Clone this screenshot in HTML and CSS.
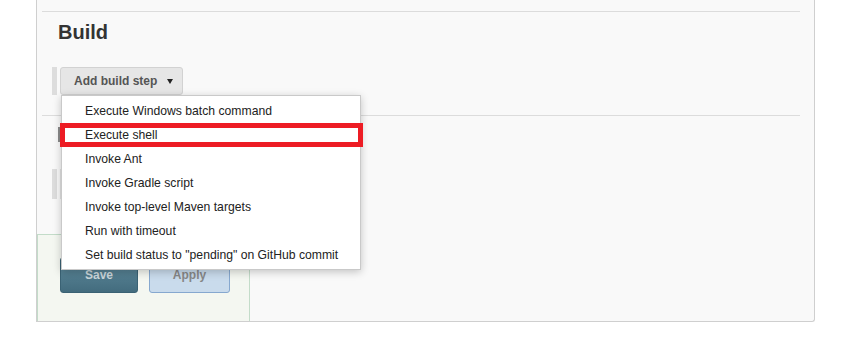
FILE: index.html
```html
<!DOCTYPE html>
<html>
<head>
<meta charset="utf-8">
<link rel="stylesheet" href="styles.css">
</head>
<body>
<div class="page">
  <div class="panel">
    <div class="section">
      <div class="rule"></div>
      <h2 class="title">Build</h2>
      <div class="step-row">
        <span class="handle"></span>
        <button class="step-btn"><span>Add build step</span><span class="caret"></span></button>
      </div>
      <div class="rule rule-2"></div>
      <div class="hidden-bit"></div>
      <div class="step-row step-row-2">
        <span class="handle tall"></span>
        <span class="edge"></span>
      </div>
    </div>
    <div class="bottom-bar">
      <button class="btn save">Save</button>
      <button class="btn apply">Apply</button>
    </div>
  </div>

  <ul class="menu">
    <li class="item">Execute Windows batch command</li>
    <li class="item focus">Execute shell</li>
    <li class="item">Invoke Ant</li>
    <li class="item">Invoke Gradle script</li>
    <li class="item">Invoke top-level Maven targets</li>
    <li class="item">Run with timeout</li>
    <li class="item">Set build status to "pending" on GitHub commit</li>
  </ul>
  <div class="highlight"></div>
</div>
</body>
</html>
```

FILE: styles.css
```css
html, body {
  margin: 0;
  padding: 0;
  background: #ffffff;
  font-family: "Liberation Sans", Arial, sans-serif;
}

.page {
  position: relative;
  width: 843px;
  height: 341px;
  overflow: hidden;
}

.panel {
  margin-left: 36px;
  width: 779px;
  height: 322px;
  box-sizing: border-box;
  background: #f9f9f9;
  border: 1px solid #cfcfcf;
  border-top: none;
  border-bottom-right-radius: 3px;
  display: flex;
  flex-direction: column;
}

.section {
  margin: 0 14px 0 5px;
  padding-top: 11px;
}

.rule {
  height: 0;
  border-top: 1px solid #dcdcdc;
}

.title {
  margin: 8px 0 0 16px;
  font-size: 20px;
  line-height: 24px;
  font-weight: bold;
  color: #333333;
}

.step-row {
  display: flex;
  align-items: stretch;
  margin: 23px 0 0 10px;
  gap: 3px;
}

.handle {
  display: block;
  width: 5px;
  background: #dddddd;
}

.step-btn {
  width: 123px;
  height: 28px;
  box-sizing: border-box;
  margin: 0;
  padding: 0 9px 0 13px;
  display: flex;
  align-items: center;
  justify-content: space-between;
  background: #e6e6e6;
  border: 1px solid #d2d2d2;
  border-radius: 3px;
  font-family: "Liberation Sans", Arial, sans-serif;
  font-size: 12px;
  font-weight: bold;
  color: #555555;
}

.caret {
  width: 0;
  height: 0;
  border-left: 3.5px solid transparent;
  border-right: 3.5px solid transparent;
  border-top: 5px solid #222222;
  margin-top: 1px;
}

.rule-2 {
  margin-top: 20px;
}

.hidden-bit {
  margin: 11px 0 0 16px;
  width: 3px;
  height: 15px;
  background: #8a8a8a;
}

.step-row-2 {
  margin-top: 27px;
  height: 30px;
  gap: 3px;
}

.tall {
  height: 30px;
}

.edge {
  display: block;
  width: 1px;
  background: #e2e2e2;
}

.bottom-bar {
  margin-top: 35px;
  width: 213px;
  flex: 1;
  box-sizing: border-box;
  background: #f4f7f1;
  border-top: 1px solid #c3dcc9;
  border-right: 1px solid #c3dcc9;
  border-left: 1px solid #c3dcc9;
  display: flex;
  align-items: flex-start;
  gap: 11px;
  padding: 22px 0 0 22px;
}

.btn {
  height: 36px;
  margin: 0;
  box-sizing: border-box;
  border-radius: 3px;
  font-family: "Liberation Sans", Arial, sans-serif;
  font-size: 12px;
  font-weight: bold;
}

.save {
  width: 78px;
  background: linear-gradient(#5f8b9d, #436c7e);
  border: 1px solid #3a6274;
  color: #c9d5da;
}

.apply {
  width: 81px;
  background: #c9dbec;
  border: 1px solid #86a8cf;
  color: #878787;
}

.menu {
  position: absolute;
  left: 61px;
  top: 95px;
  width: 300px;
  box-sizing: border-box;
  margin: 0;
  padding: 3px 0 2px 0;
  list-style: none;
  background: #ffffff;
  border: 1px solid #c9c9c9;
  box-shadow: 0 2px 8px rgba(0, 0, 0, 0.22);
}

.item {
  position: relative;
  height: 24px;
  line-height: 24px;
  padding-left: 23px;
  font-size: 12.2px;
  color: #222222;
  white-space: nowrap;
}

.item.focus::after {
  content: "";
  position: absolute;
  right: 1px;
  top: 3px;
  bottom: 3px;
  border-right: 1px dotted #000000;
}

.highlight {
  position: absolute;
  left: 60px;
  top: 123px;
  width: 303px;
  height: 24px;
  box-sizing: border-box;
  border: 5px solid #ed1c24;
}
```
